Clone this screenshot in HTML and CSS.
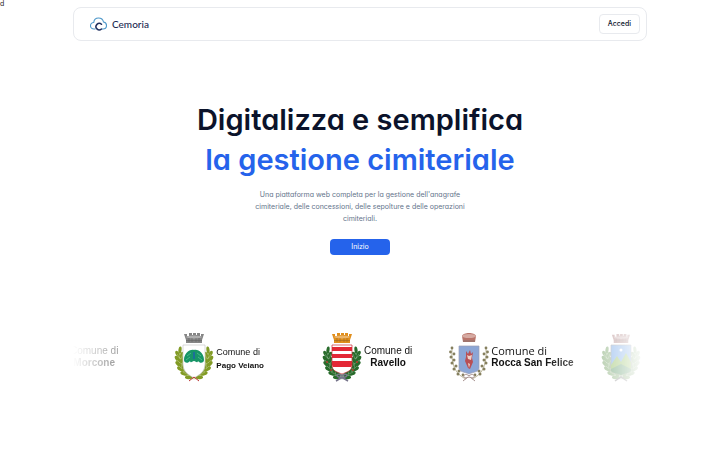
FILE: index.html
```html
<!DOCTYPE html>
<html lang="it">
<head>
  <meta charset="UTF-8" />
  <meta name="viewport" content="width=device-width, initial-scale=1.0"/>
  <title>Cemoria</title>
  <link rel="stylesheet" href="styles.css">
</head>
<body>
  <svg class="defs" aria-hidden="true">
    <!-- left half of the laurel, mirrored for the right half -->
    <symbol id="branch" viewBox="0 0 40 50" overflow="visible">
      <path d="M20 45C12 43 6 34 6 20" fill="none" stroke="currentColor" stroke-width="5" opacity=".55"/>
      <g fill="currentColor">
        <ellipse cx="6" cy="18" rx="1.600" ry="3.600" transform="rotate(8 6 18)"/>
        <ellipse cx="3.500" cy="22" rx="1.700" ry="3.500" transform="rotate(-28 3.500 22)"/>
        <ellipse cx="8" cy="23" rx="1.800" ry="3.400" transform="rotate(28 8 23)"/>
        <ellipse cx="3.500" cy="27" rx="1.900" ry="3.700" transform="rotate(-38 3.500 27)"/>
        <ellipse cx="8" cy="28" rx="1.900" ry="3.400" transform="rotate(18 8 28)"/>
        <ellipse cx="4.500" cy="32" rx="1.900" ry="3.800" transform="rotate(-48 4.500 32)"/>
        <ellipse cx="9.500" cy="33" rx="1.900" ry="3.600" transform="rotate(5 9.500 33)"/>
        <ellipse cx="6.500" cy="37" rx="1.900" ry="3.800" transform="rotate(-58 6.500 37)"/>
        <ellipse cx="12" cy="37.500" rx="1.900" ry="3.600" transform="rotate(-8 12 37.500)"/>
        <ellipse cx="10" cy="41.500" rx="1.900" ry="3.800" transform="rotate(-70 10 41.500)"/>
        <ellipse cx="16" cy="42" rx="1.700" ry="3.400" transform="rotate(-25 16 42)"/>
        <ellipse cx="14.500" cy="45.500" rx="1.700" ry="3.600" transform="rotate(-85 14.500 45.500)"/>
      </g>
      <path d="M3 22l2 3M3 28l3 3M5 34l3 3M9 40l4 2M9 22l-2 5M9 30l-1 4" fill="none" stroke="#fff" stroke-width=".6" opacity=".4"/>
    </symbol>
    <symbol id="wreath" viewBox="0 0 40 50" overflow="visible">
      <use href="#branch" width="40" height="50"/>
      <use href="#branch" width="40" height="50" transform="translate(40 0) scale(-1 1)"/>
    </symbol>
    <symbol id="crown" viewBox="0 0 22 12">
      <path d="M1 2h3v2h2V1h3v2h1V1h3v2h1V1h3v3h1V2h3l-2 6v3H3V8z" fill="currentColor"/>
      <ellipse cx="11" cy="5" rx="8" ry="1.500" fill="#fff" opacity=".35"/>
      <path d="M3 8.500h16M6 6v4M9 6v4M13 6v4M16 6v4" stroke="#333" stroke-width=".6" opacity=".4"/>
    </symbol>
  </svg>

  <p class="stray">d</p>

  <div class="page">
    <nav class="navbar">
      <a class="brand" href="#">
        <svg class="brand-icon" viewBox="0 0 34 28" fill="none" stroke-linecap="round">
          <path d="M10 24H8C4 24 1 21 1 17.500C1 14 4 11 7.500 11C8 5.500 12 2 17 2C22 2 26 5 27 10C30.500 10.500 33 13 33 17C33 21 30 24 26 24H25" stroke="#4c97c9" stroke-width="2.200"/>
          <path d="M23 14.500A6.500 6.500 0 1 0 23 24" stroke="#20305f" stroke-width="3"/>
        </svg>
        <span>Cemoria</span>
      </a>
      <button class="login" type="button">Accedi</button>
    </nav>

    <main class="hero">
      <h1>Digitalizza e semplifica<br><span class="accent">la gestione cimiteriale</span></h1>
      <p class="lead">Una piattaforma web completa per la gestione dell'anagrafe cimiteriale, delle concessioni, delle sepolture e delle operazioni cimiteriali.</p>
      <button class="start" type="button">Inizio</button>
    </main>

    <section class="marquee">
      <div class="comune morcone">
        <div class="name"><span>Comune di</span><strong>Morcone</strong></div>
      </div>

      <div class="comune pago">
        <svg class="crest" viewBox="0 0 40 50">
          <use href="#wreath" width="40" height="50" color="#829b25"/>
          <use href="#crown" x="9" y="0" width="22" height="12" color="#858585"/>
          <path d="M9 13h22v19c0 8-6 11-11 14C15 43 9 40 9 32z" fill="#fff" stroke="#c8c8c8" stroke-width=".7"/>
          <path d="M20 18c5-1 10 4 10 10 0 3-4 4-6 1-1 3-2 0-4 0s-3 3-4 0c-2 3-6 2-6-1 0-6 5-11 10-10z" fill="#179567"/>
          <path d="M20 20v7" stroke="#1b6f9a" stroke-width="2"/>
          <path d="M13 24l4-3M27 24l-4-3M12 28l4-3M28 28l-4-3" stroke="#62c496" stroke-width=".7"/>
          <path d="M15 49l5-4 5 4" fill="none" stroke="#b33" stroke-width="1"/>
        </svg>
        <div class="name"><span>Comune di</span><strong>Pago Veiano</strong></div>
      </div>

      <div class="comune ravello">
        <svg class="crest" viewBox="0 0 40 50">
          <use href="#wreath" width="40" height="50" color="#286b2b"/>
          <g fill="#b33a2c">
            <circle cx="5" cy="30" r="1"/><circle cx="9" cy="38" r="1"/><circle cx="35" cy="30" r="1"/><circle cx="31" cy="38" r="1"/>
          </g>
          <use href="#crown" x="9" y="0" width="22" height="12" color="#e08e1c"/>
          <path d="M10 13h20v20c0 6-5 7-10 9-5-2-10-3-10-9z" fill="#fff"/>
          <path d="M10 15h20v4H10zM10 22h20v4H10zM10 29h20v4l-1 2H11l-1-2z" fill="#e32836"/>
          <path d="M10 13h20v20c0 6-5 7-10 9-5-2-10-3-10-9z" fill="none" stroke="#c72c35" stroke-width=".7"/>
          <path d="M20 44c-4-4-7 0-3 1l3 1 3-1c4-1 1-5-3-1zM19 46l-5 3M21 46l5 3" fill="none" stroke="#77748b" stroke-width="1.500"/>
        </svg>
        <div class="name"><span>Comune di</span><strong>Ravello</strong></div>
      </div>

      <div class="comune rocca">
        <svg class="crest" viewBox="0 0 40 50">
          <path d="M17 47C8 43 2 35 3 17M23 47c9-4 15-12 14-30" fill="none" stroke="#a9a27e" stroke-width=".8"/>
          <g fill="#857f5e">
            <circle cx="3" cy="16" r="1.400"/><circle cx="1.500" cy="20" r="1.400"/><circle cx="5" cy="22" r="1.400"/><circle cx="2" cy="25" r="1.500"/><circle cx="5" cy="28" r="1.500"/><circle cx="3" cy="31" r="1.500"/><circle cx="7" cy="34" r="1.500"/><circle cx="5" cy="37" r="1.500"/><circle cx="10" cy="39" r="1.500"/><circle cx="9" cy="42" r="1.500"/><circle cx="14" cy="43" r="1.400"/>
            <circle cx="37" cy="16" r="1.400"/><circle cx="38.500" cy="20" r="1.400"/><circle cx="35" cy="22" r="1.400"/><circle cx="38" cy="25" r="1.500"/><circle cx="35" cy="28" r="1.500"/><circle cx="37" cy="31" r="1.500"/><circle cx="33" cy="34" r="1.500"/><circle cx="35" cy="37" r="1.500"/><circle cx="30" cy="39" r="1.500"/><circle cx="31" cy="42" r="1.500"/><circle cx="26" cy="43" r="1.400"/>
          </g>
          <path d="M13 4c1-4 13-4 14 0l-1 6H14z" fill="#b9746a"/>
          <ellipse cx="20" cy="4" rx="7" ry="2" fill="#d6aaa2"/>
          <path d="M14 9h12" stroke="#8a7770" stroke-width="1"/>
          <path d="M10 14h20v22c0 4-6 4-10 6-4-2-10-2-10-6z" fill="#8ba6d6" stroke="#9b9db5" stroke-width=".7"/>
          <path d="M17 19l2 3 2-4 1 4 2-2-1 6 1 4-3 7-2-1-3-7 1-4z" fill="#b94f54"/>
          <path d="M18 23l2 1 3-1-1 5-3-1zM19 31l2 1-1 4z" fill="#f0d2c7"/>
          <path d="M20 44c-4-4-8 1-3 2l3-1 3 1c5-1 1-6-3-2zM19 45l-5 4M21 45l5 4" fill="none" stroke="#a89391" stroke-width="1"/>
        </svg>
        <div class="name"><span>Comune di</span><strong>Rocca San Felice</strong></div>
      </div>

      <div class="comune last">
        <svg class="crest" viewBox="0 0 40 50">
          <use href="#wreath" width="40" height="50" color="#6d9c5c"/>
          <use href="#crown" x="10" y="1" width="20" height="11" color="#9c6666"/>
          <path d="M10 13h20v25c0 3-6 3-10 5-4-2-10-2-10-5z" fill="#4b8de0" stroke="#777" stroke-width=".7"/>
          <path d="M10 33l6-9 4 6 5-9 5 9v8c0 3-6 3-10 5-4-2-10-2-10-5z" fill="#6fa82f"/>
          <path d="M10 37l10-5 10 5v1c0 3-6 3-10 5-4-2-10-2-10-5z" fill="#337f42"/>
          <circle cx="20" cy="18" r="1.500" fill="#fff"/>
          <path d="M14 49l6-4 6 4" fill="none" stroke="#777" stroke-width="1.500"/>
        </svg>
      </div>
    </section>
  </div>
</body>
</html>
```
FILE: styles.css
```css
* {
  box-sizing: border-box;
}
body {
  margin: 0;
  background: #fff;
  color: #0b132b;
  font-family: Inter, "Liberation Sans", sans-serif;
  font-feature-settings: "cv11";
}
h1, p {
  margin: 0;
}
button {
  font: inherit;
  font-feature-settings: inherit;
  cursor: pointer;
}
.defs {
  position: absolute;
  width: 0;
  height: 0;
}
.stray {
  color: #222;
  font-size: 7px;
  line-height: 7px;
}
.page {
  padding: 0 73px;
}
.navbar {
  display: flex;
  align-items: center;
  justify-content: space-between;
  padding: 6px 6px 6px 16px;
  border: 1px solid #e8eaee;
  border-radius: 8px;
}
.brand {
  display: flex;
  align-items: center;
  gap: 5px;
  color: #20284f;
  font-family: Lato, sans-serif;
  font-size: 10px;
  font-weight: 500;
  text-decoration: none;
}
.brand-icon {
  width: 17px;
  height: 14px;
}
.login {
  padding: 3px 8px;
  border: 1px solid #e8eaee;
  border-radius: 4px;
  background: #fff;
  color: #0b132b;
  font-size: 7px;
  font-weight: 500;
  line-height: 12px;
}
.hero {
  display: flex;
  flex-direction: column;
  align-items: center;
  padding-top: 59px;
  text-align: center;
}
h1 {
  font-size: 29px;
  font-weight: 600;
  line-height: 40px;
}
.accent {
  color: #2563eb;
}
.lead {
  max-width: 224px;
  margin-top: 9px;
  color: #64748b;
  font-size: 7px;
  line-height: 12px;
}
.start {
  width: 60px;
  margin-top: 14px;
  padding: 0;
  border: 0;
  border-radius: 4px;
  background: #2563eb;
  color: #fff;
  font-size: 7px;
  line-height: 16px;
}
.marquee {
  display: flex;
  align-items: center;
  margin-top: 77px;
  overflow: hidden;
  mask-image: linear-gradient(to right, transparent, #000 18%, #000 82%, transparent);
}
.comune {
  display: flex;
  flex: none;
  align-items: center;
  gap: 2px;
  font-family: "Liberation Sans", sans-serif;
  color: #111;
}
.crest {
  width: 40px;
  height: 50px;
}
.name {
  display: flex;
  flex-direction: column;
  font-size: 10px;
  line-height: 12px;
  white-space: nowrap;
}
.morcone {
  margin-left: -3px;
}
.morcone .name {
  text-align: center;
}
.pago {
  margin-left: 56px;
}
.pago .name {
  padding-top: 4px;
  font-size: 9px;
  line-height: 14px;
}
.pago strong {
  font-size: 8px;
}
.ravello {
  margin-left: 58px;
}
.ravello .name {
  text-align: center;
}
.rocca {
  margin-left: 37px;
}
.rocca .name span {
  font-family: "Open Sans", sans-serif;
  font-size: 11px;
}
.last {
  margin-left: 27px;
}
```
